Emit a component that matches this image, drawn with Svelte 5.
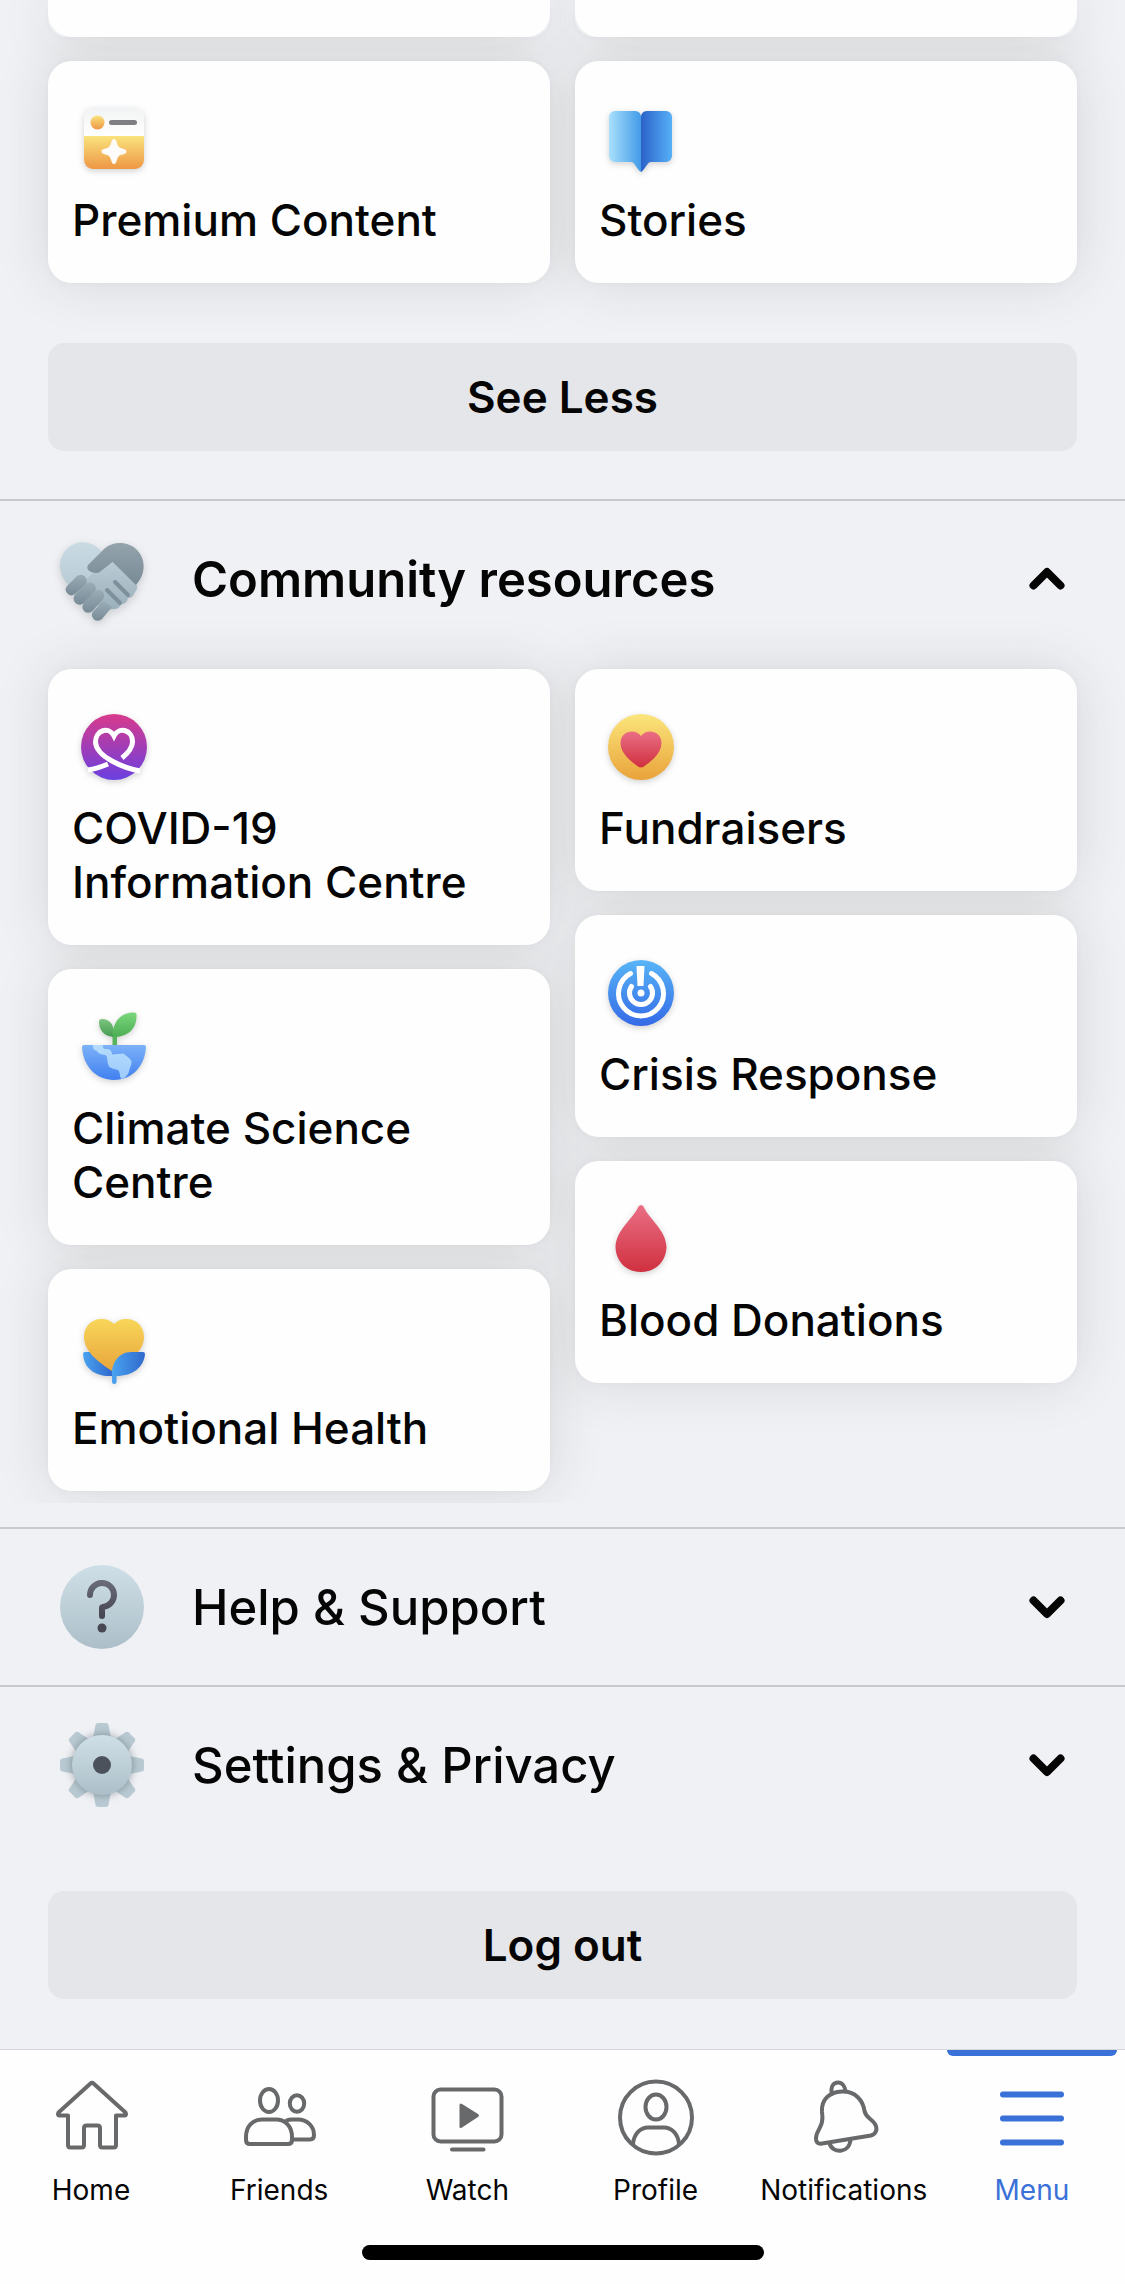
<script>
  let shortcuts = [
    { name: "Premium Content", icon: "premium" },
    { name: "Stories", icon: "stories" },
  ];

  let resources = [
    [
      { name: "COVID-19 Information Centre", icon: "covid" },
      { name: "Climate Science Centre", icon: "climate" },
      { name: "Emotional Health", icon: "emotional" },
    ],
    [
      { name: "Fundraisers", icon: "fundraisers" },
      { name: "Crisis Response", icon: "crisis" },
      { name: "Blood Donations", icon: "blood" },
    ],
  ];

  let tabs = ["Home", "Friends", "Watch", "Profile", "Notifications", "Menu"];
  let activeTab = "Menu";

  let open = {
    community: true,
    help: false,
    settings: false,
  };

  const toggle = (key) => {
    open[key] = !open[key];
  };

  const gradients = [
    { id: "gold", from: "#fbe67c", to: "#e9a33a" },
    { id: "amber", from: "#f8d659", to: "#e8a53c" },
    { id: "orange", from: "#fae37d", to: "#ee9745" },
    { id: "paper", from: "#f2f3f4", to: "#ffffff" },
    { id: "pageLeft", from: "#a9e0fc", to: "#429be8", flat: true },
    { id: "pageRight", from: "#2b62c8", to: "#57b0f8", flat: true },
    { id: "purple", from: "#d83a8c", to: "#6a40e0" },
    { id: "red", from: "#ea6f85", to: "#d0303f" },
    { id: "blue", from: "#58b5f7", to: "#346ae6" },
    { id: "sea", from: "#7cb2f8", to: "#4180f0" },
    { id: "land", from: "#b5dcfd", to: "#9dcafb" },
    { id: "leaf", from: "#7ad67a", to: "#4cae55" },
    { id: "leafDark", from: "#7cc67f", to: "#479a50" },
    { id: "petal", from: "#4aa3f0", to: "#2f69cc", flat: true },
    { id: "steel", from: "#cfdfe7", to: "#acbfc8" },
    { id: "steelDark", from: "#94a3ac", to: "#788b96" },
    { id: "skyGrey", from: "#c9dae3", to: "#b4c8d2" },
    { id: "palm", from: "#b9cad4", to: "#9aafba" },
    { id: "finger", from: "#9badb7", to: "#778b96" },
    { id: "ink", from: "#686a78", to: "#454651" },
  ];

  const teeth = [0, 45, 90, 135, 180, 225, 270, 315];
</script>

{#snippet tileIcon(icon)}
  <svg class="tile-icon" viewBox="0 0 84 84" aria-hidden="true">
    {#if icon === "premium"}
      <path d="M12 39V20a9 9 0 0 1 9-9h42a9 9 0 0 1 9 9v19z" fill="url(#paper)" />
      <path d="M12 39h60v24a9 9 0 0 1-9 9H21a9 9 0 0 1-9-9z" fill="url(#orange)" />
      <circle cx="25.5" cy="25.5" r="7" fill="url(#orange)" />
      <path d="M39.500 25.500H62.500" stroke="#7f7f83" stroke-width="5" stroke-linecap="round" />
      <path
        d="M42 42c-3 0-2.500 6-5 8s-7.500 1.500-7.500 4.500 5 2.500 7.500 4.500 2 8 5 8 2.500-6 5-8 7.500-1.500 7.500-4.500-5-2.500-7.500-4.500-2-8-5-8z"
        fill="#fdfcfa"
      />
    {:else if icon === "stories"}
      <path d="M42 75c-4-2-6-10-10-10H16a6 6 0 0 1-6-6V20a6 6 0 0 1 6-6h20c4 0 6 3 6 6z" fill="url(#pageLeft)" />
      <path d="M42 75c4-2 6-10 10-10h15a6 6 0 0 0 6-6V20a6 6 0 0 0-6-6H48c-4 0-6 3-6 6z" fill="url(#pageRight)" />
    {:else if icon === "covid"}
      <circle cx="42" cy="42" r="33" fill="url(#purple)" />
      <g fill="none" stroke="#fff" stroke-width="5">
        <path d="M68 66C52 63 24 52 23.500 37C23.500 25 37 21 42 31C47 21 61 25 60.500 37C60.500 43 56 48 50 53" />
        <path d="M16 65C23 64 29 62 36 59" />
      </g>
    {:else if icon === "fundraisers"}
      <circle cx="42" cy="42" r="33" fill="url(#gold)" />
      <path
        d="M42 31C38 24 22 24 21.500 38C21.500 49 33 57 39 61.500Q42 63.500 45 61.500C51 57 62.500 49 62.500 38C62 24 46 24 42 31z"
        fill="url(#red)"
      />
    {:else if icon === "climate"}
      <path d="M40.500 41V30h4.500v11z" fill="#54b35b" />
      <path d="M41 32C31 31 27 24 27 17Q27 14 30 14C38 14 43 20 42 32z" fill="url(#leafDark)" />
      <path d="M41 32C40 16 50 7 62 7.500Q65 7.500 64.500 11C64.500 24 56 32 41 32z" fill="url(#leaf)" />
      <path d="M12 40h60q2 0 2 2C73 61 60 75 42 75S11 61 10 42q0-2 2-2z" fill="url(#sea)" />
      <path
        d="M21 40H31Q30 44 34 44C38 44 40 46 40 49.500C44 49 49 49 51.500 48.500C54 51 58 53 59.500 56C60 60 57 64 57 67Q54 73 50 74C47 73 49 68 46 65C43 64 37 64 36 59C35 56 36 51 33 50C29 49 26 49 25 46C21 45 21 43 21 40z"
        fill="url(#land)"
      />
    {:else if icon === "emotional"}
      <path d="M13 47h8L40 60v11C24 72 12 64 11 49q0-2 2-2z" fill="url(#petal)" />
      <path
        d="M42 19C46 15 50 14 54.500 14C65 14 72 22 72 32C72 47 56 57 40 66C26 57 12 46 12 32C12 22 19 14 29.500 14C34 14 38 15 42 19z"
        fill="url(#amber)"
      />
      <path d="M40 71C39 58 47 47 59 47H71q2 0 2 2C72 62 61 71 44.500 71v6q0 2-2.250 2T40 77z" fill="url(#petal)" />
    {:else if icon === "crisis"}
      <circle cx="42" cy="42" r="33" fill="url(#blue)" />
      <g fill="none" stroke="#fff" stroke-width="5" stroke-linecap="round">
        <path d="M31.500 22.500A22.500 22.500 0 1 0 52.500 22.500" />
        <path d="M32.500 35.500A11.500 11.500 0 1 0 51.500 35.500" />
      </g>
      <path d="M37.500 15h8l-1 20h-6z" fill="#fff" />
      <circle cx="42" cy="42" r="3.500" fill="#fff" />
    {:else if icon === "blood"}
      <path
        d="M39.500 9.500Q42 6.500 44.500 9.500C50 22 67 33 67.500 50C67 65 56 75 42 75S17 65 16.500 50C17 33 34 22 39.500 9.500z"
        fill="url(#red)"
      />
    {/if}
  </svg>
{/snippet}

{#snippet tile(item)}
  <a class="tile" href="#{item.icon}">
    {@render tileIcon(item.icon)}
    <span>{item.name}</span>
  </a>
{/snippet}

{#snippet chevron(up)}
  <svg class="chevron" class:up viewBox="0 0 36 24" aria-hidden="true">
    <path d="M4.500 5.500L18 19L31.500 5.500" />
  </svg>
{/snippet}

<svg class="defs" width="0" height="0" aria-hidden="true">
  <defs>
    {#each gradients as g}
      <linearGradient id={g.id} x1="0" y1="0" x2={g.flat ? 1 : 0} y2={g.flat ? 0 : 1}>
        <stop offset="0" stop-color={g.from} />
        <stop offset="1" stop-color={g.to} />
      </linearGradient>
    {/each}
  </defs>
</svg>

<div class="app">
  <main>
    <div class="grid shortcuts">
      <div class="column">
        <div class="tile cut"></div>
        {@render tile(shortcuts[0])}
      </div>
      <div class="column">
        <div class="tile cut"></div>
        {@render tile(shortcuts[1])}
      </div>
    </div>
    <button class="wide-button see-less">See Less</button>

    <section>
      <button class="row strong" aria-expanded={open.community} on:click={() => toggle("community")}>
        <svg class="row-icon shadow" viewBox="0 0 84 84" aria-hidden="true">
          <path d="M0 29A23 23 0 0 1 41 14L58 34L40 62L12 51C4 45 0 37 0 29z" fill="url(#skyGrey)" />
          <path
            d="M53 26L76 47Q79 51 75 55Q73 61 68 61Q67 67 61 67Q59 73 52 72L44 74L18 50L40 30z"
            fill="url(#palm)"
          />
          <path
            d="M29 27L44 12C53 4 68 4 77 13C86 22 86 37 76 48L52.500 25L41 34C38 37 34 36 31 35C27 33 26 30 29 27z"
            fill="url(#steelDark)"
          />
          <path d="M16.500 39.500A5.700 5.700 0 0 1 25 48L15 57A5.700 5.700 0 0 1 7 49z" fill="url(#finger)" />
          <path d="M25.500 47A5.700 5.700 0 0 1 34 56L24 66A5.700 5.700 0 0 1 15.500 57z" fill="url(#finger)" />
          <path d="M34 54.500A5.700 5.700 0 0 1 42.500 63L32.500 74A5.700 5.700 0 0 1 24 66z" fill="url(#finger)" />
          <path d="M43 64L52 70L42 82A5.700 5.700 0 0 1 33.500 74z" fill="url(#finger)" />
          <path d="M55 45L68 58M47 53L60 66" stroke="#7d909b" stroke-width="4" stroke-linecap="round" />
        </svg>
        <span>Community resources</span>
        {@render chevron(open.community)}
      </button>
      {#if open.community}
        <div class="grid resources">
          {#each resources as column}
            <div class="column">
              {#each column as item}
                {@render tile(item)}
              {/each}
            </div>
          {/each}
        </div>
      {/if}
    </section>

    <section>
      <button class="row" aria-expanded={open.help} on:click={() => toggle("help")}>
        <svg class="row-icon" viewBox="0 0 84 84" aria-hidden="true">
          <circle cx="42" cy="42" r="42" fill="url(#steel)" />
          <path
            d="M30 30A12 12 0 1 1 43 41.900Q42 42 42 43V51"
            fill="none"
            stroke="url(#ink)"
            stroke-width="6"
            stroke-linecap="round"
          />
          <circle cx="42" cy="63" r="4.500" fill="#474853" />
        </svg>
        <span>Help &amp; Support</span>
        {@render chevron(open.help)}
      </button>
    </section>

    <section>
      <button class="row" aria-expanded={open.settings} on:click={() => toggle("settings")}>
        <svg class="row-icon" viewBox="0 0 84 84" aria-hidden="true">
          {#each teeth as angle}
            <path d="M33 15L35.500 2Q36 0 38 0H46Q48 0 48.500 2L51 15z" fill="#b9cad3" transform="rotate({angle} 42 42)" />
          {/each}
          <circle class="hub" cx="42" cy="42" r="30" fill="url(#steel)" />
          <circle cx="42" cy="42" r="9" fill="#4b525c" />
        </svg>
        <span>Settings &amp; Privacy</span>
        {@render chevron(open.settings)}
      </button>
    </section>

    <button class="wide-button log-out">Log out</button>
  </main>

  <nav>
    <div class="tabs">
      {#each tabs as tab}
        <button class="tab" class:active={tab === activeTab} on:click={() => (activeTab = tab)}>
          <svg class="tab-icon" viewBox="0 0 84 84" aria-hidden="true">
            {#if tab === "Home"}
              <path
                d="M41.500 8.500Q43 7 44.500 8.500L76.500 37.500Q78 40.500 75 40.500H67V70Q67 72.500 64.500 72.500H53.500Q51 72.500 51 70V53Q51 50.500 48.500 50.500H37.500Q35 50.500 35 53V70Q35 72.500 32.500 72.500H21.500Q19 72.500 19 70V40.500H11Q8 40.500 9.500 37.500z"
              />
            {:else if tab === "Friends"}
              <ellipse cx="32" cy="25.500" rx="9" ry="11.500" />
              <ellipse cx="60" cy="28.500" rx="7.200" ry="8.300" />
              <path d="M9 62C9 51 16 44.500 25 44.500H39C48 44.500 55 51 55 62V65Q55 69 51 69H13Q9 69 9 65z" />
              <path d="M49.500 45.500Q52 44.500 55 44.500H61C70 44.500 77 51 77 60Q77 64.500 73 64.500H55" />
            {:else if tab === "Watch"}
              <rect x="8.500" y="14.500" width="68" height="52" rx="7" />
              <path class="solid" d="M34.500 30Q34.500 27.500 37 29L53 39Q55 40.500 53 42L37 52.500Q34.500 54 34.500 51.500z" />
              <path d="M27 74.500H58.500" />
            {:else if tab === "Profile"}
              <circle cx="42" cy="42.500" r="36" />
              <ellipse cx="42" cy="32" rx="10.500" ry="12.500" />
              <path d="M19 69C20 58 27 52.500 34 52.500H50C57 52.500 64 58 65 69" />
            {:else if tab === "Notifications"}
              <path
                d="M40 16.500C27 17 19 25 20 37C22 50 17 52 14.500 60C13 66 15 69.500 20 68.500L69 60.500C74 59 76 54 73 49C69 43 64 43 62.500 36C61 25 53 16 40 16.500z"
              />
              <path d="M30 19C28 11 32 7.500 36 7.500S43 11 43.500 16.500" />
              <path d="M27.500 68C30 79 48 79 48.500 64" />
            {:else}
              <path class="bars" d="M13 19.500H71M13 43.500H71M13 67.500H71" />
            {/if}
          </svg>
          <span>{tab}</span>
        </button>
      {/each}
    </div>
    <div class="home-indicator"></div>
  </nav>
</div>

<style>
  :global(body) {
    margin: 0;
    background: #f0f1f5;
  }

  .app {
    min-height: 100vh;
    display: flex;
    flex-direction: column;
    font-family: Inter, "Liberation Sans", sans-serif;
    font-weight: 500;
    color: #050505;
    background: #f0f1f5;
  }

  .defs {
    position: absolute;
  }

  button {
    margin: 0;
    padding: 0;
    border: 0;
    background: none;
    font: inherit;
    color: inherit;
    cursor: pointer;
  }

  main {
    flex: 1;
    display: flex;
    flex-direction: column;
    padding-bottom: 50px;
  }

  .grid {
    display: grid;
    grid-template-columns: 1fr 1fr;
    gap: 25px;
    padding: 0 48px;
    isolation: isolate;
  }

  .column {
    display: flex;
    flex-direction: column;
    gap: 24px;
  }

  .resources {
    padding-top: 12px;
    padding-bottom: 12px;
    margin-bottom: 24px;
    clip-path: inset(-40px 0 0 0);
  }

  .tile {
    position: relative;
    display: flex;
    flex-direction: column;
    gap: 12px;
    padding: 36px 48px 36px 24px;
    border-radius: 24px;
    background: #fefefe;
    color: inherit;
    text-decoration: none;
    font-size: 44px;
    line-height: 54px;
  }

  /* the shadows sit below every tile, so neighbours stay clean */
  .tile::before {
    content: "";
    position: absolute;
    inset: 0;
    z-index: -1;
    border-radius: 24px;
    box-shadow: 0 0 54px rgba(50, 50, 20, 0.13), 0 0 6px rgba(0, 0, 0, 0.03);
  }

  .cut {
    height: 37px;
    padding: 0;
    border-radius: 0 0 24px 24px;
  }

  .tile-icon {
    width: 84px;
    height: 84px;
    filter: drop-shadow(0 2px 3px rgba(0, 0, 0, 0.18));
  }

  .wide-button {
    height: 108px;
    margin: 0 48px;
    border-radius: 16px;
    background: #e5e6ea;
    font-size: 44px;
    font-weight: 600;
  }

  .see-less {
    position: relative;
    margin-top: 60px;
    margin-bottom: 48px;
  }

  .log-out {
    margin-top: 48px;
  }

  section {
    border-top: 2px solid #c8c9ce;
  }

  .row {
    width: 100%;
    height: 156px;
    padding: 0 60px;
    display: flex;
    align-items: center;
    gap: 48px;
    font-size: 49px;
    text-align: left;
  }

  .row span {
    flex: 1;
  }

  .strong {
    font-weight: 600;
  }

  .row-icon {
    width: 84px;
    height: 84px;
  }

  .shadow {
    filter: drop-shadow(0 3px 4px rgba(0, 0, 0, 0.15));
  }

  .hub {
    filter: drop-shadow(0 0 4px rgba(60, 75, 85, 0.5));
  }

  .chevron {
    width: 36px;
    height: 24px;
    fill: none;
    stroke: #050505;
    stroke-width: 8;
    stroke-linecap: round;
    stroke-linejoin: round;
  }

  .up {
    transform: rotate(180deg);
  }

  nav {
    border-top: 1px solid #d6d7db;
    background: #fefefe;
    padding-bottom: 24px;
  }

  .tabs {
    display: flex;
    justify-content: space-between;
    padding: 0 8px 0 6px;
  }

  .tab {
    position: relative;
    width: 170px;
    padding-top: 25px;
    display: flex;
    flex-direction: column;
    align-items: center;
    gap: 15px;
    font-size: 28px;
    font-weight: 400;
    line-height: 32px;
  }

  .tab-icon {
    width: 84px;
    height: 84px;
    fill: none;
    stroke: #68696b;
    stroke-width: 4;
    stroke-linecap: round;
    stroke-linejoin: round;
  }

  .solid {
    fill: #68696b;
    stroke: none;
  }

  .bars {
    stroke-width: 6;
  }

  .active {
    color: #3a71d8;
  }

  .active .tab-icon {
    stroke: #3a71d8;
  }

  .active::before {
    content: "";
    position: absolute;
    top: 0;
    left: 0;
    right: 0;
    height: 6px;
    border-radius: 0 0 6px 6px;
    background: #3a71d8;
  }

  .home-indicator {
    width: 402px;
    height: 15px;
    margin: 39px auto 0;
    border-radius: 8px;
    background: #000;
  }
</style>
